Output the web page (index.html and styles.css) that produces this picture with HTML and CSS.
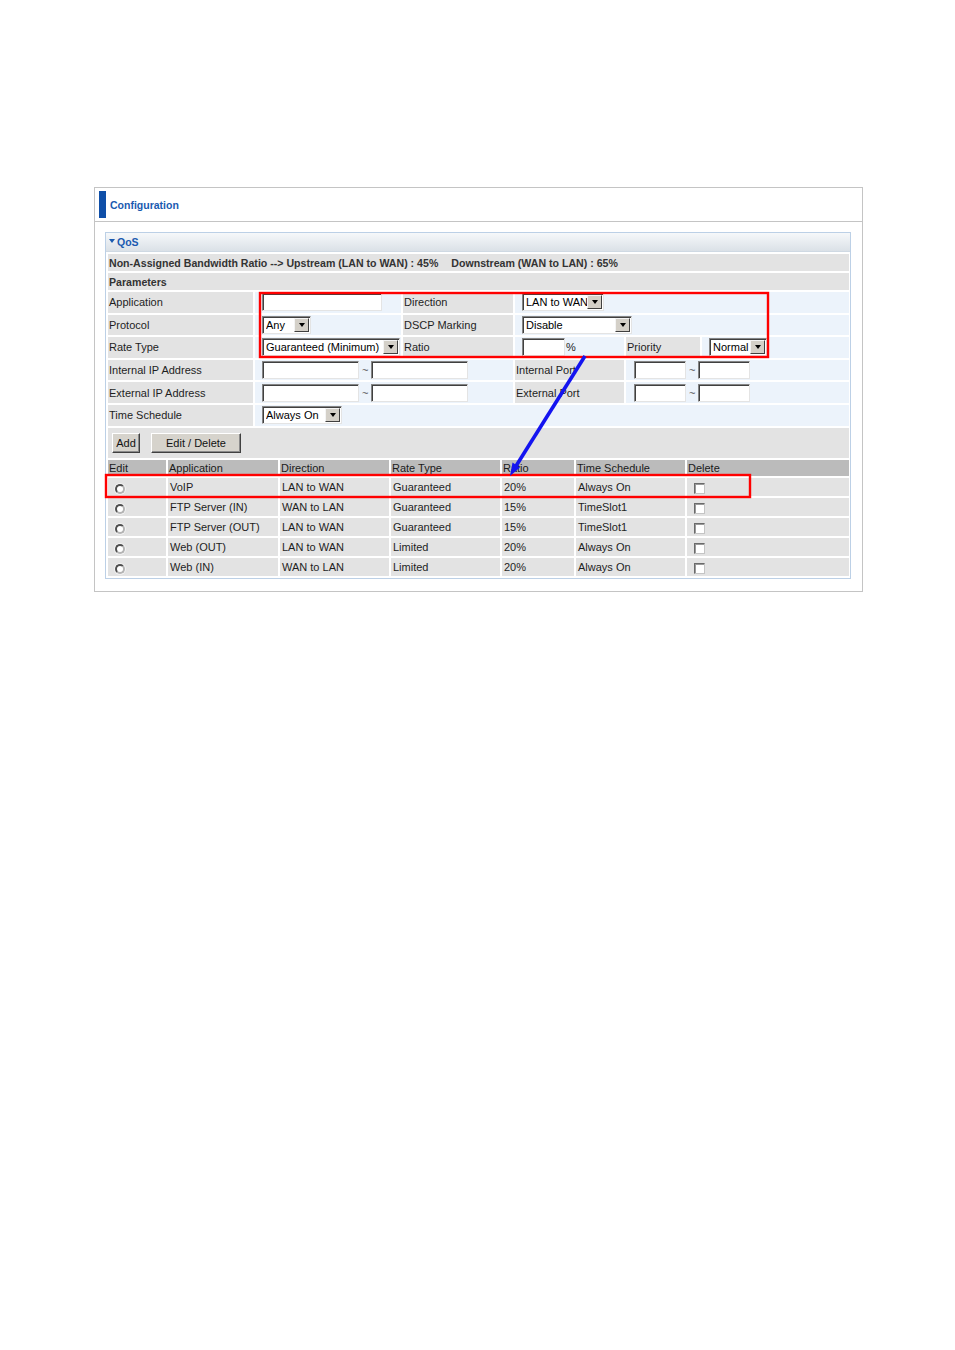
FILE: index.html
```html
<!DOCTYPE html>
<html lang="en">
<head>
    <meta charset="UTF-8">
    <title>QoS Configuration</title>
    <link rel="stylesheet" href="styles.css">
</head>
<body>
    <div class="config">
        <div class="config-head">
            <span class="bar"></span>
            <span class="title">Configuration</span>
        </div>

        <div class="config-body">
            <div class="panel">
                <div class="panel-head"><span class="tri"></span>QoS</div>

                <div class="panel-body">
                    <div class="form">
                        <div class="cell lbl strong full">
                            <span>Non-Assigned Bandwidth Ratio --&gt; Upstream (LAN to WAN) : 45%</span>
                            <span class="down">Downstream (WAN to LAN) : 65%</span>
                        </div>
                        <div class="cell lbl strong full">Parameters</div>

                        <div class="cell lbl">Application</div>
                        <div class="cell val"><input type="text" class="txt w-app"></div>
                        <div class="cell lbl">Direction</div>
                        <div class="cell val span3">
                            <span class="sel w-dir"><select><option>LAN to WAN</option></select><i class="arr"></i></span>
                        </div>

                        <div class="cell lbl">Protocol</div>
                        <div class="cell val">
                            <span class="sel w-any"><select><option>Any</option></select><i class="arr"></i></span>
                        </div>
                        <div class="cell lbl">DSCP Marking</div>
                        <div class="cell val span3">
                            <span class="sel w-dscp"><select><option>Disable</option></select><i class="arr"></i></span>
                        </div>

                        <div class="cell lbl">Rate Type</div>
                        <div class="cell val">
                            <span class="sel w-rate"><select><option>Guaranteed (Minimum)</option></select><i class="arr"></i></span>
                        </div>
                        <div class="cell lbl">Ratio</div>
                        <div class="cell val"><input type="text" class="txt w-ratio"><span class="pct">%</span></div>
                        <div class="cell lbl">Priority</div>
                        <div class="cell val">
                            <span class="sel w-prio"><select><option>Normal</option></select><i class="arr"></i></span>
                        </div>

                        <div class="cell lbl">Internal IP Address</div>
                        <div class="cell val span2"><input type="text" class="txt w-ip"><span class="tilde">~</span><input type="text" class="txt w-ip"></div>
                        <div class="cell lbl">Internal Port</div>
                        <div class="cell val span2 port"><input type="text" class="txt w-port"><span class="tilde">~</span><input type="text" class="txt w-port"></div>

                        <div class="cell lbl">External IP Address</div>
                        <div class="cell val span2"><input type="text" class="txt w-ip"><span class="tilde">~</span><input type="text" class="txt w-ip"></div>
                        <div class="cell lbl">External Port</div>
                        <div class="cell val span2 port"><input type="text" class="txt w-port"><span class="tilde">~</span><input type="text" class="txt w-port"></div>

                        <div class="cell lbl">Time Schedule</div>
                        <div class="cell val span5">
                            <span class="sel w-time"><select><option>Always On</option></select><i class="arr"></i></span>
                        </div>

                        <div class="cell lbl full buttons">
                            <button class="btn w-add">Add</button>
                            <button class="btn w-edit">Edit / Delete</button>
                        </div>
                    </div>

                    <div class="list" id="ruleList">
                        <div class="th">Edit</div>
                        <div class="th">Application</div>
                        <div class="th">Direction</div>
                        <div class="th">Rate Type</div>
                        <div class="th">Ratio</div>
                        <div class="th">Time Schedule</div>
                        <div class="th">Delete</div>
                    </div>
                </div>
            </div>
        </div>
    </div>

    <svg class="marks" width="955" height="650" viewBox="0 0 955 650">
        <rect x="260" y="293" width="508" height="64" fill="none" stroke="#ff0000" stroke-width="2.4"/>
        <rect x="106" y="475" width="644" height="22" fill="none" stroke="#ff0000" stroke-width="2.4"/>
        <line x1="585" y1="356" x2="516" y2="466" stroke="#1414f0" stroke-width="3.6"/>
        <polygon points="510,476 512.5,462.5 520,467.5" fill="#1414f0"/>
    </svg>

    <script>
        var rules = [
            { app: "VoIP", dir: "LAN to WAN", rate: "Guaranteed", ratio: "20%", time: "Always On" },
            { app: "FTP Server (IN)", dir: "WAN to LAN", rate: "Guaranteed", ratio: "15%", time: "TimeSlot1" },
            { app: "FTP Server (OUT)", dir: "LAN to WAN", rate: "Guaranteed", ratio: "15%", time: "TimeSlot1" },
            { app: "Web (OUT)", dir: "LAN to WAN", rate: "Limited", ratio: "20%", time: "Always On" },
            { app: "Web (IN)", dir: "WAN to LAN", rate: "Limited", ratio: "20%", time: "Always On" }
        ];

        var list = document.getElementById("ruleList");
        rules.forEach(function (r) {
            list.insertAdjacentHTML("beforeend",
                '<div class="td"><input type="radio" name="edit" class="radio"></div>' +
                '<div class="td">' + r.app + '</div>' +
                '<div class="td">' + r.dir + '</div>' +
                '<div class="td">' + r.rate + '</div>' +
                '<div class="td">' + r.ratio + '</div>' +
                '<div class="td">' + r.time + '</div>' +
                '<div class="td"><input type="checkbox" class="check"></div>');
        });
    </script>
</body>
</html>
```

FILE: styles.css
```css
body {
    margin: 0;
    background-color: #ffffff;
    font-family: "Liberation Sans", Arial, sans-serif;
    font-size: 11px;
    color: #1e1e1e;
    position: relative;
}

.config {
    width: 769px;
    margin: 187px 0 0 94px;
    border: 1px solid #c4c4c4;
    box-sizing: border-box;
}

.config-head {
    height: 33px;
    display: flex;
    align-items: center;
    border-bottom: 1px solid #c4c4c4;
}

.config-head .bar {
    width: 7px;
    height: 27px;
    margin-left: 4px;
    margin-right: 4px;
    background-color: #0f4fa8;
}

.config-head .title {
    color: #1a5ab0;
    font-weight: bold;
    font-size: 10.5px;
}

.config-body {
    padding: 10px 11px 12px 10px;
}

.panel {
    border: 1px solid #bcd0e6;
}

.panel-head {
    height: 18px;
    display: flex;
    align-items: center;
    padding-left: 2px;
    color: #1a5ab0;
    font-weight: bold;
    font-size: 10.5px;
    background: linear-gradient(#f6f8fa, #dbe1e7);
    border-bottom: 1px solid #cfd9e3;
}

.panel-head .tri {
    width: 0;
    height: 0;
    border-left: 3px solid transparent;
    border-right: 3px solid transparent;
    border-top: 4px solid #1a5ab0;
    margin: 0 2px 2px 1px;
}

.panel-body {
    padding: 2px 1px 2px 2px;
}

/* parameter form */
.form {
    display: grid;
    grid-template-columns: 145px 146px 110px 109px 74px 147px;
    grid-template-rows: 17px 17px repeat(6, 20.6px) 30px;
    gap: 2px;
}

.cell {
    display: flex;
    align-items: center;
    white-space: nowrap;
}

.lbl {
    background-color: #e3e3e3;
    padding: 0 2px 0 1px;
}

.val {
    background-color: #ecf3fb;
    padding-left: 7px;
}

.val.port {
    padding-left: 8px;
}

.strong {
    font-weight: bold;
    font-size: 10.6px;
    color: #333333;
}

.strong .down {
    margin-left: 13px;
}

.full { grid-column: 1 / -1; }
.span2 { grid-column: span 2; }
.span3 { grid-column: span 3; }
.span5 { grid-column: span 5; }

.txt {
    height: 18px;
    box-sizing: border-box;
    margin: 0;
    padding: 0 2px;
    border: 1px solid;
    border-color: #858585 #e4e4e4 #e4e4e4 #858585;
    box-shadow: inset 1px 1px 0 #404040;
    background-color: #ffffff;
    font: inherit;
}

.w-app { width: 120px; }
.w-ip { width: 97px; }
.w-port { width: 52px; }
.w-ratio { width: 43px; }

.tilde {
    margin: 0 3px;
    color: #555555;
}

.pct {
    margin-left: 1px;
}

.sel {
    display: inline-flex;
    height: 18px;
    box-sizing: border-box;
    border: 1px solid;
    border-color: #858585 #e4e4e4 #e4e4e4 #858585;
    box-shadow: inset 1px 1px 0 #404040;
    background-color: #ffffff;
    padding: 1px;
}

.sel select {
    appearance: none;
    -webkit-appearance: none;
    flex: 1;
    min-width: 0;
    border: none;
    background: transparent;
    font: inherit;
    color: #000000;
    padding: 0 0 0 2px;
    margin: 0;
    outline: none;
}

.sel .arr {
    width: 15px;
    box-sizing: border-box;
    background-color: #d4d0c8;
    border: 1px solid;
    border-color: #f4f4f4 #404040 #404040 #f4f4f4;
    display: flex;
    align-items: center;
    justify-content: center;
}

.sel .arr::before {
    content: "";
    border-left: 3.5px solid transparent;
    border-right: 3.5px solid transparent;
    border-top: 4px solid #000000;
}

.w-any { width: 49px; }
.w-rate { width: 138px; }
.w-dir { width: 82px; }
.w-dscp { width: 110px; }
.w-prio { width: 58px; }
.w-time { width: 80px; }

.buttons {
    padding-left: 4px;
    gap: 11px;
}

.btn {
    height: 20px;
    margin-top: 1px;
    padding: 0;
    font: inherit;
    color: #111111;
    background-color: #d6d3cc;
    border: 1px solid;
    border-color: #ffffff #404040 #404040 #ffffff;
    box-shadow: inset -1px -1px 0 #8a8a8a;
}

.w-add { width: 28px; }
.w-edit { width: 90px; }

/* rule list */
.list {
    display: grid;
    grid-template-columns: 58px 110px 109px 109px 72px 109px 162px;
    grid-auto-rows: 18px;
    grid-template-rows: 16px;
    gap: 2px;
    margin-top: 2px;
}

.th {
    background-color: #bbbbbb;
    padding-left: 1px;
    display: flex;
    align-items: center;
    color: #1a1a1a;
}

.td {
    background-color: #e3e3e3;
    padding-left: 2px;
    display: flex;
    align-items: center;
    white-space: nowrap;
}

.radio {
    appearance: none;
    -webkit-appearance: none;
    width: 10px;
    height: 10px;
    box-sizing: border-box;
    margin: 4px 0 0 5px;
    border-radius: 50%;
    border: 2px solid;
    border-color: #505050 #b4b4b4 #b4b4b4 #505050;
    background-color: #ffffff;
    box-shadow: 0 0 0 1px #f2f2f2;
}

.check {
    appearance: none;
    -webkit-appearance: none;
    width: 11px;
    height: 11px;
    box-sizing: border-box;
    margin: 3px 0 0 5px;
    border: 1px solid;
    border-color: #6a6a6a #c4c4c4 #c4c4c4 #6a6a6a;
    box-shadow: inset 1px 1px 0 #9a9a9a;
    background-color: #ffffff;
}

.marks {
    position: absolute;
    left: 0;
    top: 0;
    pointer-events: none;
}
```
